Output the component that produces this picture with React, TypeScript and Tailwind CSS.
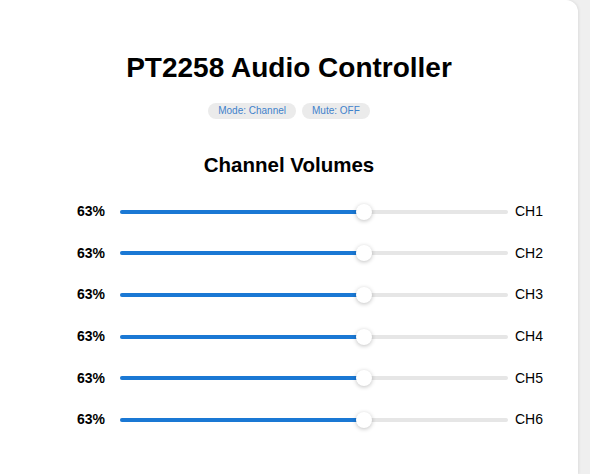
const channels = ["CH1", "CH2", "CH3", "CH4", "CH5", "CH6"];

const Slider: React.FC<{ value: number }> = ({ value }) => {
  return (
    <div className="relative w-[388px] h-[16px] flex items-center">
      <div className="w-full h-[4px] rounded-full bg-[#e6e6e6]" />
      <div
        className="absolute left-0 h-[4px] rounded-full bg-[#1a78d4]"
        style={{ width: `${value}%` }}
      />
      <div
        className="absolute w-[16px] h-[16px] -ml-[8px] rounded-full bg-white shadow-[0_1px_4px_rgba(0,0,0,0.25)]"
        style={{ left: `${value}%` }}
      />
    </div>
  );
};

export default function App() {
  return (
    <div className="w-[590px] h-[474px] bg-[#efefef] font-['Liberation_Sans',Arial,sans-serif] overflow-hidden">
      <div className="w-[578px] h-full bg-white rounded-tr-[12px] shadow-[1px_0_3px_rgba(0,0,0,0.08)] flex flex-col items-center pt-[50px]">
        <h1 className="text-[28px] leading-[36px] font-bold text-black">
          PT2258 Audio Controller
        </h1>
        <div className="flex gap-[6px] mt-[17px]">
          <span className="px-[10px] h-[16px] leading-[16px] rounded-full bg-[#ebebeb] text-[10px] text-[#3f82cc]">
            Mode: Channel
          </span>
          <span className="px-[10px] h-[16px] leading-[16px] rounded-full bg-[#ebebeb] text-[10px] text-[#3f82cc]">
            Mute: OFF
          </span>
        </div>
        <h2 className="mt-[33px] text-[20.5px] leading-[26px] font-bold text-black">
          Channel Volumes
        </h2>
        <div className="mt-[13px] w-full flex flex-col">
          {channels.map((ch) => (
            <div key={ch} className="flex items-center h-[41.6px] pl-[60px]">
              <span className="w-[45px] text-right text-[14px] font-bold text-black">
                63%
              </span>
              <div className="ml-[15px]">
                <Slider value={63} />
              </div>
              <span className="ml-[7px] text-[14px] text-black">{ch}</span>
            </div>
          ))}
        </div>
      </div>
    </div>
  );
}
